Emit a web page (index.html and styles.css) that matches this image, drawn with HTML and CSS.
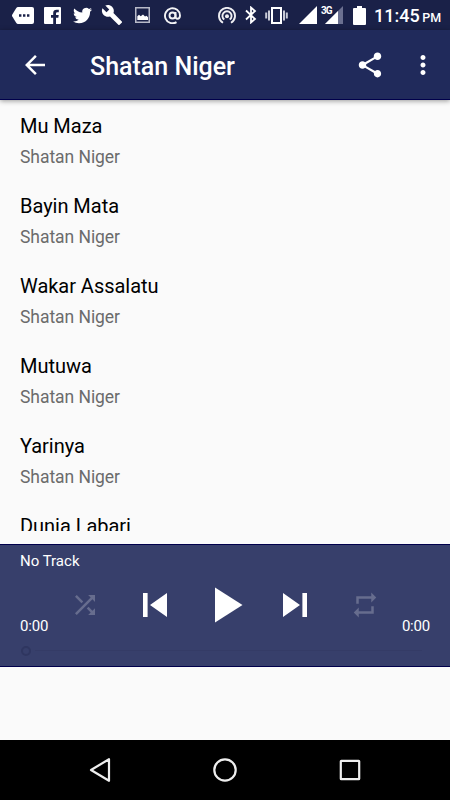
FILE: index.html
```
<!DOCTYPE html>
<html lang="en">
<head>
<meta charset="utf-8">
<title>Shatan Niger</title>
<link rel="stylesheet" href="styles.css">
</head>
<body>
<div class="screen">
  <div class="status">
    <div class="notifications">
      <svg width="22" height="17" viewBox="0 0 22 17"><path fill="#fff" d="M6 0h14q2 0 2 2v13q0 2-2 2H6q-1 0-1.700-1L.3 9.500q-.6-1 0-2L4.300 1Q5 0 6 0z"/><path fill="#1a2148" d="M7 7.300h2.400v2.400H7zM11 7.300h2.400v2.400H11zM15 7.300h2.400v2.400H15z"/></svg>
      <svg width="17" height="17" viewBox="0 0 17 17"><path fill="#fff" d="M1 0h15q1 0 1 1v15q0 1-1 1h-4v-6.300h2.300l.4-2.700H12V6.600q0-1.400 1.300-1.400h1.500V2.700h-2.200Q9.200 2.700 9.200 6v2H7v2.700h2.200V17H1q-1 0-1-1V1q0-1 1-1z"/></svg>
      <svg width="19" height="19" viewBox="0 0 24 24"><path fill="#fff" d="M23.953 4.570a10 10 0 01-2.825.775 4.958 4.958 0 002.163-2.723c-.951.555-2.005.959-3.127 1.184a4.920 4.920 0 00-8.384 4.482C7.690 8.095 4.067 6.130 1.640 3.162a4.822 4.822 0 00-.666 2.475c0 1.710.87 3.213 2.188 4.096a4.904 4.904 0 01-2.228-.616v.06a4.923 4.923 0 003.946 4.827 4.996 4.996 0 01-2.212.085 4.936 4.936 0 004.604 3.417 9.867 9.867 0 01-6.102 2.105c-.39 0-.779-.023-1.170-.067a13.995 13.995 0 007.557 2.209c9.053 0 13.998-7.496 13.998-13.985 0-.21 0-.42-.015-.63A9.935 9.935 0 0024 4.590z"/></svg>
      <svg width="22" height="22" viewBox="0 0 24 24"><path fill="#fff" d="M22.700 19l-9.100-9.100c.9-2.300.4-5-1.500-6.900-2-2-5-2.400-7.400-1.300L9 6 6 9 1.600 4.700C.4 7.100.9 10.100 2.900 12.100c1.900 1.900 4.600 2.400 6.900 1.500l9.100 9.100c.4.400 1 .4 1.400 0l2.300-2.300c.5-.4.5-1.100.1-1.400z"/></svg>
      <svg class="picture" width="15" height="16" viewBox="0 0 15 16"><path fill="none" stroke="#b8bac8" stroke-width="1.500" d="M.75.75h13.500v14.500H.75z"/><path fill="#fff" d="M2.300 13V9.200L4 7.800l1.700 1.400L8 7.500l2 2 1.500-.7 1.500 1.500V13z"/></svg>
      <svg class="at" width="17" height="17" viewBox="0 0 17 17"><g fill="none" stroke="#f4f4f6" stroke-width="1.900"><path d="M12.500 15.100A7.500 7.500 0 1 1 16 8.500q0 3.200-2.500 3.200-2 0-2-2.200V5"/><circle cx="8.500" cy="8.500" r="3"/></g></svg>
    </div>
    <div class="system">
      <svg width="18" height="17" viewBox="0 0 18 17"><g fill="none" stroke="#eeeef2" stroke-width="1.900"><path d="M5 15.800a8 8 0 1 1 8 0"/><path d="M6.300 12.600a4.600 4.600 0 1 1 5.400 0"/></g><circle cx="9" cy="9.300" r="2" fill="#eeeef2"/></svg>
      <svg class="bluetooth" width="12" height="18" viewBox="0 0 12 18"><path fill="none" stroke="#fff" stroke-width="1.800" d="M1 4.500l9 8.500-4 3.500v-15L10 5l-9 8.500"/></svg>
      <svg class="vibrate" width="23" height="17" viewBox="0 0 23 17"><path fill="none" stroke="#fff" stroke-width="2" d="M7 1h9v15H7z"/><path stroke="#c9cbd7" stroke-width="2" d="M4 3.500v10M19 3.500v10M1.200 5.500v6M21.800 5.500v6"/></svg>
      <svg class="signal" width="18" height="18" viewBox="0 0 18 18"><path fill="#fff" d="M18 0v18H0z"/></svg>
      <div class="mobile"><span class="network">3G</span><svg width="19" height="18" viewBox="0 0 19 18"><path fill="#6b7090" d="M19 0v18H1z"/><path fill="#fff" d="M14 5v13H1z"/></svg></div>
      <svg class="battery" width="13" height="19" viewBox="0 0 13 19"><path fill="#fff" d="M4 0h5v2h3q1 0 1 1v15q0 1-1 1H1q-1 0-1-1V3q0-1 1-1h3z"/></svg>
      <div class="clock">11:45 <span class="meridiem">PM</span></div>
    </div>
  </div>

  <header class="toolbar">
    <svg class="icon" viewBox="0 0 24 24"><path d="M20 11H7.830l5.590-5.590L12 4l-8 8 8 8 1.410-1.410L7.830 13H20v-2z"/></svg>
    <h1 class="title">Shatan Niger</h1>
    <svg class="icon share" viewBox="0 0 24 24"><path d="M18 16.080c-.76 0-1.440.3-1.960.77L8.910 12.700c.05-.23.09-.46.09-.7s-.04-.47-.09-.7l7.050-4.110c.54.5 1.250.81 2.040.81 1.660 0 3-1.340 3-3s-1.340-3-3-3-3 1.340-3 3c0 .24.04.47.09.7L8.040 9.810C7.500 9.310 6.790 9 6 9c-1.660 0-3 1.340-3 3s1.340 3 3 3c.79 0 1.500-.31 2.040-.81l7.120 4.160c-.05.21-.08.43-.08.65 0 1.610 1.310 2.920 2.920 2.920s2.920-1.310 2.920-2.920-1.310-2.920-2.920-2.920z"/></svg>
    <svg class="icon" viewBox="0 0 24 24"><path d="M12 8c1.100 0 2-.9 2-2s-.9-2-2-2-2 .9-2 2 .9 2 2 2zm0 2c-1.100 0-2 .9-2 2s.9 2 2 2 2-.9 2-2-.9-2-2-2zm0 6c-1.100 0-2 .9-2 2s.9 2 2 2 2-.9 2-2-.9-2-2-2z"/></svg>
  </header>

  <main class="tracks">
    <div class="track"><div class="name">Mu Maza</div><div class="artist">Shatan Niger</div></div>
    <div class="track"><div class="name">Bayin Mata</div><div class="artist">Shatan Niger</div></div>
    <div class="track"><div class="name">Wakar Assalatu</div><div class="artist">Shatan Niger</div></div>
    <div class="track"><div class="name">Mutuwa</div><div class="artist">Shatan Niger</div></div>
    <div class="track"><div class="name">Yarinya</div><div class="artist">Shatan Niger</div></div>
    <div class="track"><div class="name">Dunia Labari</div></div>
  </main>

  <section class="player">
    <div class="now">No Track</div>
    <div class="deck">
      <span class="time">0:00</span>
      <div class="controls">
        <svg class="icon dim" viewBox="0 0 24 24"><path d="M10.590 9.170L5.410 4 4 5.410l5.170 5.170 1.420-1.410zM14.500 4l2.040 2.040L4 18.590 5.410 20 17.960 7.460 20 9.500V4h-5.500zm.33 9.410l-1.410 1.410 3.130 3.130L14.500 20H20v-5.500l-2.040 2.040-3.130-3.130z"/></svg>
        <svg class="icon skip" viewBox="0 0 24 24"><path d="M6 6h2.300v12H6zm3.500 6l8.500 6V6z"/></svg>
        <svg class="icon play" viewBox="0 0 24 24"><path d="M8 5v14l11-7z"/></svg>
        <svg class="icon skip" viewBox="0 0 24 24"><path d="M6 18l8.500-6L6 6v12zM15.700 6v12H18V6h-2.300z"/></svg>
        <svg class="icon dim" viewBox="0 0 24 24"><path d="M7 7h10v3l4-4-4-4v3H5v6h2V7zm10 10H7v-3l-4 4 4 4v-3h12v-6h-2v4z"/></svg>
      </div>
      <span class="time">0:00</span>
    </div>
    <div class="seek"><span class="thumb"></span><span class="rail"></span></div>
  </section>

  <nav class="navbar">
    <svg width="30" height="30" viewBox="0 0 30 30"><path d="M24 4.200v21.600L6 15z"/></svg>
    <svg width="30" height="30" viewBox="0 0 30 30"><circle cx="15" cy="15" r="10.700"/></svg>
    <svg width="30" height="30" viewBox="0 0 30 30"><rect x="5.800" y="5.800" width="18.400" height="18.400" rx=".5"/></svg>
  </nav>
</div>
</body>
</html>
```

FILE: styles.css
```
* { box-sizing: border-box; }
body { margin: 0; font-family: Roboto, "Liberation Sans", sans-serif; }
svg { display: block; flex: none; }

.screen {
  width: 450px;
  height: 800px;
  display: flex;
  flex-direction: column;
  background: #fafafa;
  overflow: hidden;
}

.status {
  height: 30px;
  flex: none;
  display: flex;
  align-items: center;
  justify-content: space-between;
  padding: 0 10px 0 12px;
  background: #1a2148;
}
.notifications { display: flex; align-items: center; gap: 10px; }
.notifications svg:nth-child(3) { margin-left: 2px; }
.notifications svg:nth-child(4) { margin-left: -1px; }
.picture { margin-left: 2px; }
.at { margin-left: 4px; }
.system { display: flex; align-items: center; color: #fff; width: 222px; }
.bluetooth { margin-left: 9px; }
.vibrate { margin-left: 8px; }
.signal { margin-left: 11px; }
.mobile { position: relative; margin-left: 7px; }
.network {
  position: absolute;
  left: -3px;
  top: 0;
  font-size: 10px;
  line-height: 10px;
  font-weight: 700;
  letter-spacing: -1px;
}
.battery { margin-left: 10px; }
.clock {
  margin-left: 8px;
  font-size: 18px;
  line-height: 30px;
  padding-top: 3px;
  font-weight: 500;
  white-space: nowrap;
  word-spacing: -2px;
}
.meridiem { font-size: 12.500px; }

.toolbar {
  position: relative;
  height: 70px;
  flex: none;
  display: flex;
  align-items: center;
  padding: 0 12.500px 0 20px;
  background: #202a5b;
  border-bottom: 1px solid #00004b;
  box-shadow: 0 1px 5px rgba(0, 0, 0, 0.4);
}
.icon { width: 30px; height: 30px; fill: #fff; }
.title {
  flex: 1;
  margin: 4px 0 0 40px;
  font-size: 25px;
  line-height: 30px;
  font-weight: 500;
  color: #fff;
}
.share { margin-right: 22.500px; }

.tracks { height: 431px; flex: none; overflow: hidden; }
.track { height: 80px; padding: 13px 20px 0; }
.name { font-size: 20px; line-height: 26px; color: #000; letter-spacing: -0.030px; }
.artist { margin-top: 6px; font-size: 17.500px; line-height: 24px; color: #6b6b6b; letter-spacing: -0.050px; }

.player {
  height: 123px;
  flex: none;
  margin-top: 13px;
  background: #373f6b;
  border-top: 1px solid #00004b;
  border-bottom: 1px solid #00004b;
  color: #fff;
}
.now { padding: 7px 20px 0; font-size: 15px; line-height: 18px; height: 29px; }
.deck {
  height: 62px;
  display: flex;
  align-items: center;
  justify-content: space-between;
  padding: 0 20px;
}
.time { width: 30px; font-size: 15px; line-height: 18px; padding-top: 42px; letter-spacing: -0.200px; }
.time:last-child { text-align: right; }
.controls {
  width: 350px;
  flex: none;
  margin: 0 -1px;
  display: grid;
  grid-template-columns: repeat(5, 70px);
  align-items: center;
  justify-items: center;
}
.skip { width: 48px; height: 48px; }
.play { width: 60px; height: 60px; }
.dim { fill: #676d8e; }
.seek { display: flex; align-items: center; gap: 4px; height: 29px; padding: 0 28px 0 21px; }
.thumb { width: 10px; height: 10px; border: 2px solid #2f3660; border-radius: 50%; }
.rail { flex: 1; height: 1px; background: #343b66; }

.navbar {
  height: 60px;
  flex: none;
  margin-top: auto;
  display: flex;
  align-items: center;
  justify-content: space-between;
  padding: 0 85px;
  background: #000;
}
.navbar svg { fill: none; stroke: #eee; stroke-width: 2.200; stroke-linejoin: round; }
```
